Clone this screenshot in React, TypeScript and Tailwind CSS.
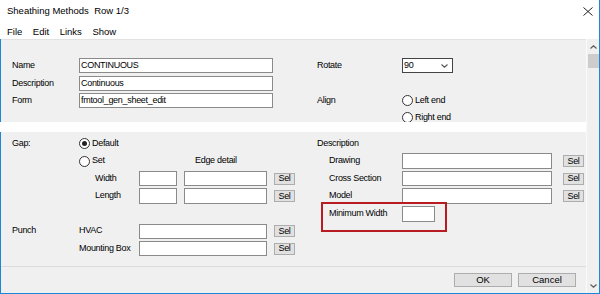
import React from "react";

const FONT = { fontFamily: '"Liberation Sans", Arial, sans-serif' };

function Input({ w, h = 15 }: { w: number; h?: number }) {
  return (
    <div
      className="bg-white border border-[#8a8a8a] shrink-0"
      style={{ width: w, height: h }}
    />
  );
}

function TextInput({ w, value }: { w: number; value: string }) {
  return (
    <div
      className="bg-white border border-[#8a8a8a] h-[15px] shrink-0 flex items-center pl-[1px] text-black"
      style={{ width: w }}
    >
      {value}
    </div>
  );
}

function Sel() {
  return (
    <div className="w-[21px] h-[12px] bg-[#e1e1e1] border border-[#adadad] flex items-center justify-center shrink-0 text-[9px] leading-none">
      Sel
    </div>
  );
}

function Radio({ checked = false, label }: { checked?: boolean; label: string }) {
  return (
    <div className="flex items-center gap-[2px]">
      <div className="w-[11px] h-[11px] rounded-full border border-[#333] bg-white flex items-center justify-center shrink-0">
        {checked && <div className="w-[5px] h-[5px] rounded-full bg-[#222]" />}
      </div>
      <span>{label}</span>
    </div>
  );
}

function Chevron({ up }: { up?: boolean }) {
  return (
    <svg width="7" height="4" viewBox="0 0 7 4">
      <path
        d={up ? "M0.5 3.5 L3.5 0.8 L6.5 3.5" : "M0.5 0.5 L3.5 3.2 L6.5 0.5"}
        fill="none"
        stroke="#5a5a5a"
        strokeWidth="1.2"
      />
    </svg>
  );
}

export default function App() {
  return (
    <div
      className="relative w-[600px] h-[294px] bg-white border-r border-b border-[#1c86d8] flex flex-col overflow-hidden text-black"
      style={FONT}
    >
      {/* Title bar */}
      <div className="h-[22px] flex items-center justify-between pl-[7px] pr-[6px] text-[9.5px] shrink-0">
        <span className="whitespace-pre">Sheathing Methods  Row 1/3</span>
        <svg width="10" height="9" viewBox="0 0 10 9">
          <path d="M0.5 0.5 L9.5 8.5 M9.5 0.5 L0.5 8.5" stroke="#222" strokeWidth="1" />
        </svg>
      </div>
      {/* Menu bar */}
      <div className="h-[17px] flex items-center pt-[3px] pl-[7px] gap-[10.5px] text-[9.5px] shrink-0">
        <span>File</span>
        <span>Edit</span>
        <span>Links</span>
        <span>Show</span>
      </div>

      {/* Content */}
      <div className="flex-1 flex min-h-0">
        <div className="flex-1 flex flex-col min-w-0 text-[9px] tracking-[-0.3px]">
          {/* Upper panel (clipped) */}
          <div className="h-[83px] bg-[#f0f0f0] border-l border-[#1c86d8] overflow-hidden shrink-0">
            <div className="h-px bg-[#e2e2e2]" />
            <div className="flex pt-[18px]">
              <div className="flex flex-col pl-[11px]">
                <div className="flex items-center h-[15px]">
                  <span className="w-[67px]">Name</span>
                  <TextInput w={194} value="CONTINUOUS" />
                </div>
                <div className="flex items-center h-[15px] mt-[3px]">
                  <span className="w-[67px]">Description</span>
                  <TextInput w={194} value="Continuous" />
                </div>
                <div className="flex items-center h-[15px] mt-[2px]">
                  <span className="w-[67px]">Form</span>
                  <TextInput w={194} value="fmtool_gen_sheet_edit" />
                </div>
              </div>
              <div className="flex flex-col ml-[44px]">
                <div className="flex items-center h-[15px]">
                  <span className="w-[85px]">Rotate</span>
                  <div className="w-[51px] h-[15px] bg-white border border-[#444] flex items-center justify-between pl-[1px] pr-[4px]">
                    <span>90</span>
                    <Chevron />
                  </div>
                </div>
                <div className="flex mt-[19px]">
                  <span className="w-[85px] h-[17px] flex items-center">Align</span>
                  <div className="flex flex-col">
                    <div className="h-[17px] flex items-center">
                      <Radio label="Left end" />
                    </div>
                    <div className="h-[17px] flex items-center">
                      <Radio label="Right end" />
                    </div>
                  </div>
                </div>
              </div>
            </div>
          </div>

          {/* White gap */}
          <div className="h-[10px] bg-white shrink-0" />

          {/* Lower panel */}
          <div className="flex-1 bg-[#f0f0f0] border-l border-[#1c86d8] flex flex-col relative">
            <div className="flex pt-[3px]">
              {/* Left column */}
              <div className="flex flex-col pl-[11px]">
                <div className="h-[17px] flex items-center">
                  <span className="w-[67px]">Gap:</span>
                  <Radio checked label="Default" />
                </div>
                <div className="h-[18px] flex items-center">
                  <span className="w-[67px]" />
                  <div className="w-[116px]">
                    <Radio label="Set" />
                  </div>
                  <span>Edge detail</span>
                </div>
                <div className="h-[17px] flex items-center">
                  <span className="w-[83px]" />
                  <span className="w-[44px]">Width</span>
                  <Input w={38} />
                  <div className="ml-[7px]">
                    <Input w={83} />
                  </div>
                  <div className="ml-[7px]">
                    <Sel />
                  </div>
                </div>
                <div className="h-[18px] flex items-center">
                  <span className="w-[83px]" />
                  <span className="w-[44px]">Length</span>
                  <Input w={38} h={16} />
                  <div className="ml-[7px]">
                    <Input w={83} h={16} />
                  </div>
                  <div className="ml-[7px]">
                    <Sel />
                  </div>
                </div>
                <div className="h-[17px]" />
                <div className="h-[18px] flex items-center">
                  <span className="w-[67px]">Punch</span>
                  <span className="w-[60px]">HVAC</span>
                  <Input w={128} />
                  <div className="ml-[7px]">
                    <Sel />
                  </div>
                </div>
                <div className="h-[17px] flex items-center">
                  <span className="w-[67px]" />
                  <span className="w-[60px] whitespace-nowrap">Mounting Box</span>
                  <Input w={128} />
                  <div className="ml-[7px]">
                    <Sel />
                  </div>
                </div>
              </div>

              {/* Right column */}
              <div className="flex flex-col ml-[22px]">
                <div className="h-[17px] flex items-center">
                  <span>Description</span>
                </div>
                <div className="h-[18px] flex items-center pl-[12px]">
                  <span className="w-[73px]">Drawing</span>
                  <Input w={150} h={16} />
                  <div className="ml-[11px]">
                    <Sel />
                  </div>
                </div>
                <div className="h-[17px] flex items-center pl-[12px]">
                  <span className="w-[73px]">Cross Section</span>
                  <Input w={150} />
                  <div className="ml-[11px]">
                    <Sel />
                  </div>
                </div>
                <div className="h-[18px] flex items-center pl-[12px]">
                  <span className="w-[73px]">Model</span>
                  <Input w={150} h={16} />
                  <div className="ml-[11px]">
                    <Sel />
                  </div>
                </div>
                <div className="h-[17px] flex items-center pl-[12px]">
                  <span className="w-[73px] whitespace-nowrap">Minimum Width</span>
                  <Input w={33} h={16} />
                </div>
              </div>
            </div>

            {/* Separator + buttons */}
            <div className="mt-auto border-t border-[#dcdcdc] h-[27px] flex justify-end items-start pt-[6px] pr-[10px] gap-[6px] tracking-normal">
              <div className="w-[58px] h-[14px] bg-[#e1e1e1] border border-[#adadad] flex items-center justify-center text-[9.5px]">
                OK
              </div>
              <div className="w-[58px] h-[14px] bg-[#e1e1e1] border border-[#adadad] flex items-center justify-center text-[9.5px]">
                Cancel
              </div>
            </div>
          </div>
        </div>

        {/* Scrollbar */}
        <div className="w-[13px] bg-[#f0f0f0] border-l border-[#fafafa] flex flex-col items-center shrink-0">
          <div className="h-[15px] flex items-center justify-center">
            <Chevron up />
          </div>
          <div className="w-[11px] h-[14px] bg-[#cdcdcd]" />
          <div className="flex-1" />
          <div className="h-[14px] flex items-center justify-center">
            <Chevron />
          </div>
        </div>
      </div>

      {/* Highlight box */}
      <div className="absolute left-[321px] top-[202px] w-[126px] h-[30px] border-2 border-[#b81c22]" />
    </div>
  );
}
